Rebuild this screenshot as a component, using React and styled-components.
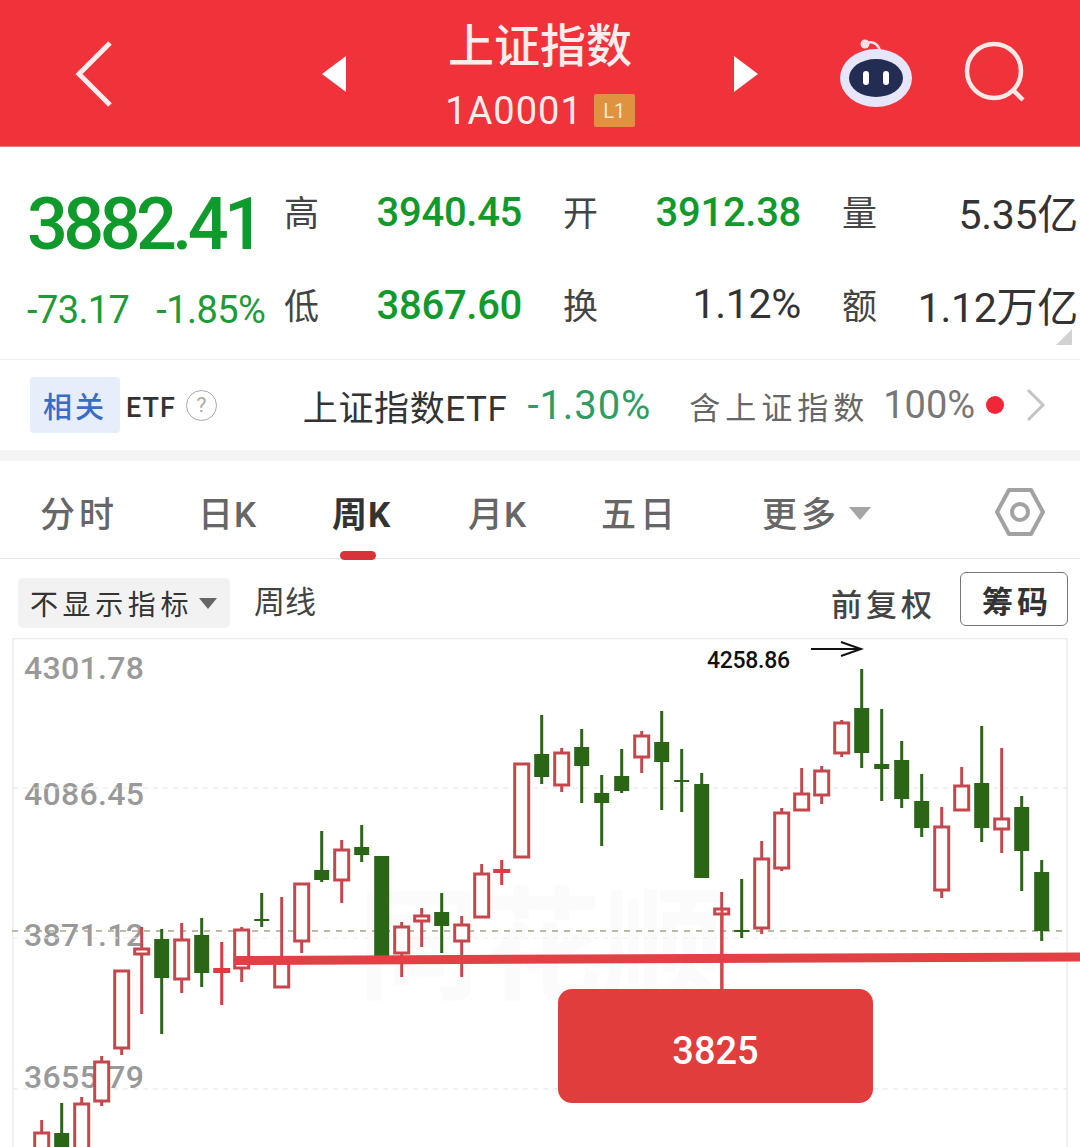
import React from "react";
import styled, { createGlobalStyle } from "styled-components";

const GlobalStyle = createGlobalStyle`
  html, body {
    margin: 0;
    padding: 0;
    background: #fff;
  }
  body {
    font-family: Roboto, "Noto Sans CJK SC", sans-serif;
  }
  * {
    box-sizing: border-box;
  }
`;

const Page = styled.div`
  width: 1080px;
  height: 1147px;
  overflow: hidden;
  background: #fff;
  display: flex;
  flex-direction: column;
`;

/* header */
const Header = styled.header`
  height: 147px;
  flex: none;
  background: #f0323b;
  border-bottom: 1px solid #e9777c;
  display: flex;
  align-items: center;
  color: #ffecec;
`;
const BackIcon = styled.svg`
  width: 44px;
  height: 70px;
  margin-left: 73px;
  margin-top: 2px;
  flex: none;
`;
const Arrow = styled.div`
  width: 0;
  height: 0;
  flex: none;
  margin-top: 2px;
  margin-left: ${({ $left }) => $left}px;
  border-top: 18px solid transparent;
  border-bottom: 18px solid transparent;
  border-left: ${({ $dir }) => ($dir === "right" ? "24px solid #fff" : "none")};
  border-right: ${({ $dir }) => ($dir === "left" ? "24px solid #fff" : "none")};
`;
const TitleBlock = styled.div`
  width: 388px;
  flex: none;
  display: flex;
  flex-direction: column;
  align-items: center;
`;
const Title = styled.div`
  font-size: 46px;
  line-height: 56px;
  font-weight: 500;
  margin-top: -1px;
`;
const CodeRow = styled.div`
  display: flex;
  align-items: center;
  gap: 11px;
  margin-top: 20px;
`;
const Code = styled.span`
  font-size: 38px;
  line-height: 34px;
  letter-spacing: 1px;
`;
const LevelBadge = styled.span`
  width: 41px;
  height: 33px;
  background: #e0923f;
  border-radius: 2px;
  color: #ffe6c8;
  font-size: 20px;
  display: flex;
  align-items: center;
  justify-content: center;
`;
const RobotIcon = styled.svg`
  width: 76px;
  height: 72px;
  margin-left: 80px;
  flex: none;
`;
const SearchIcon = styled.svg`
  width: 66px;
  height: 66px;
  margin-left: 50px;
  flex: none;
`;

/* quote block */
const Quote = styled.section`
  position: relative;
  height: 213px;
  flex: none;
  padding: 17px 0 0 27px;
  display: flex;
  border-bottom: 1px solid #ececec;
`;
const PriceBlock = styled.div`
  width: 257px;
  flex: none;
  display: flex;
  flex-direction: column;
`;
const Price = styled.div`
  height: 93px;
  padding-top: 22px;
  font-size: 72px;
  line-height: 78px;
  font-weight: 500;
  letter-spacing: -4.6px;
  color: #0f9a2b;
  white-space: nowrap;
`;
const Change = styled.div`
  height: 93px;
  display: flex;
  gap: 27px;
  padding-top: 31px;
  font-size: 38px;
  line-height: 44px;
  letter-spacing: -0.6px;
  color: #1f9a38;
  white-space: nowrap;
`;
const StatGrid = styled.div`
  display: grid;
  grid-template-columns: 238px 238px 236px;
  grid-auto-rows: 93px;
  column-gap: 41px;
`;
const Stat = styled.div`
  display: flex;
  align-items: center;
  justify-content: space-between;
`;
const StatLabel = styled.span`
  font-size: 35px;
  color: #444;
`;
const StatValue = styled.span`
  font-size: ${({ $up }) => ($up ? 40 : 41)}px;
  padding-top: ${({ $up }) => ($up ? 3 : 0)}px;
  letter-spacing: -0.3px;
  font-weight: ${({ $up }) => ($up ? 500 : 400)};
  color: ${({ $up }) => ($up ? "#0f9a2b" : "#333")};
  white-space: nowrap;
`;
const CornerMark = styled.div`
  position: absolute;
  right: 8px;
  bottom: 14px;
  width: 0;
  height: 0;
  border-left: 16px solid transparent;
  border-bottom: 16px solid #d2d2d2;
`;

/* related etf row */
const EtfRow = styled.section`
  height: 90px;
  flex: none;
  display: flex;
  align-items: center;
  padding-left: 30px;
  background: #fff;
`;
const RelatedChip = styled.div`
  width: 90px;
  height: 56px;
  flex: none;
  border-radius: 4px;
  background: #e6eefb;
  color: #3b6cc4;
  font-size: 29px;
  font-weight: 500;
  letter-spacing: 3px;
  display: flex;
  align-items: center;
  justify-content: center;
`;
const EtfTag = styled.span`
  font-size: 27px;
  font-weight: 500;
  color: #333;
  margin-left: 6px;
  margin-top: 6px;
  letter-spacing: 1px;
`;
const HelpMark = styled.span`
  width: 31px;
  height: 31px;
  margin-left: 10px;
  flex: none;
  border: 1.5px solid #aaa;
  border-radius: 50%;
  color: #aaa;
  font-size: 21px;
  display: flex;
  align-items: center;
  justify-content: center;
`;
const EtfName = styled.span`
  font-size: 35px;
  color: #333;
  margin-left: 86px;
  letter-spacing: 0.6px;
  white-space: nowrap;
`;
const EtfChange = styled.span`
  font-size: 40px;
  color: #2f9c63;
  margin-left: 20px;
  letter-spacing: 0.9px;
  white-space: nowrap;
`;
const Holding = styled.span`
  font-size: 31px;
  color: #666;
  letter-spacing: 5px;
  margin-left: 38px;
  white-space: nowrap;
`;
const Weight = styled.span`
  font-size: 38px;
  color: #777;
  margin-left: 14px;
`;
const Dot = styled.span`
  width: 18px;
  height: 18px;
  border-radius: 50%;
  flex: none;
  margin-left: 11px;
  background: #f32638;
`;
const ChevronIcon = styled.svg`
  width: 22px;
  height: 36px;
  flex: none;
  margin-left: 21px;
`;
const Band = styled.div`
  height: 11px;
  flex: none;
  background: #f4f4f4;
`;

/* period tabs */
const Tabs = styled.nav`
  height: 98px;
  flex: none;
  position: relative;
  display: grid;
  grid-template-columns: 158px 134px 136px 133px 161px auto;
  align-items: center;
  padding: 12px 0 0 40px;
  border-bottom: 1px solid #e4e4e4;
`;
const Tab = styled.div`
  position: relative;
  height: 44px;
  display: flex;
  align-items: center;
  font-size: 35px;
  line-height: 44px;
  font-weight: ${({ $active }) => ($active ? 700 : 500)};
  color: ${({ $active }) => ($active ? "#333" : "#666")};
  letter-spacing: ${({ $spacing }) => $spacing}px;
  white-space: nowrap;
`;
const Underline = styled.span`
  position: absolute;
  left: 8px;
  bottom: -22px;
  width: 36px;
  height: 9px;
  border-radius: 5px;
  background: #d8333a;
`;
const TriangleDown = styled.span`
  width: 0;
  height: 0;
  margin-left: ${({ $gap }) => $gap}px;
  margin-top: ${({ $top }) => $top || 0}px;
  border-left: ${({ $half }) => $half}px solid transparent;
  border-right: ${({ $half }) => $half}px solid transparent;
  border-top: ${({ $half }) => $half + 2}px solid ${({ $color }) => $color};
`;
const HexIcon = styled.svg`
  position: absolute;
  right: 34px;
  top: 26px;
  width: 52px;
  height: 50px;
`;

/* chart toolbar */
const Toolbar = styled.div`
  height: 79px;
  flex: none;
  display: flex;
  align-items: center;
  padding: 6px 12px 0 18px;
`;
const IndicatorChip = styled.div`
  width: 212px;
  height: 50px;
  margin-top: 3px;
  flex: none;
  display: flex;
  align-items: center;
  padding-left: 12px;
  border-radius: 5px;
  background: #f2f2f2;
  color: #333;
  font-size: 28px;
  letter-spacing: 4.6px;
  white-space: nowrap;
`;
const LineLabel = styled.span`
  margin-left: 24px;
  margin-top: -4px;
  font-size: 31px;
  color: #444;
`;
const Adjust = styled.span`
  margin-left: auto;
  margin-top: 2px;
  font-size: 31px;
  letter-spacing: 4px;
  color: #444;
  font-weight: 500;
`;
const ChipButton = styled.div`
  width: 108px;
  height: 54px;
  margin-left: 24px;
  margin-top: -5px;
  flex: none;
  display: flex;
  align-items: center;
  justify-content: center;
  padding-left: 6px;
  border: 1px solid #777;
  border-radius: 6px;
  color: #333;
  font-size: 31px;
  font-weight: 700;
  letter-spacing: 4px;
`;

/* chart */
const Chart = styled.section`
  position: relative;
  flex: 1;
  overflow: hidden;
`;
const AxisLabel = styled.span`
  position: absolute;
  left: 24px;
  top: ${({ $y }) => $y}px;
  font-size: 32px;
  line-height: 38px;
  font-weight: 500;
  letter-spacing: 0.3px;
  color: #999;
`;
const Watermark = styled.div`
  position: absolute;
  left: 358px;
  top: 245px;
  font-size: 122px;
  line-height: 130px;
  font-weight: 700;
  color: #fbfbfb;
  white-space: nowrap;
`;
const Plot = styled.svg`
  position: absolute;
  left: 0;
  top: 0;
  width: 1080px;
  height: 509px;
`;
const HighLabel = styled.span`
  position: absolute;
  left: 707px;
  top: 9px;
  font-size: 23px;
  line-height: 28px;
  font-weight: 500;
  letter-spacing: -0.3px;
  color: #111;
`;
const PriceTag = styled.div`
  position: absolute;
  left: 558px;
  top: 351px;
  width: 315px;
  height: 114px;
  border-radius: 14px;
  background: #e03d3c;
  color: #fff;
  font-size: 38px;
  font-weight: 500;
  display: flex;
  align-items: center;
  justify-content: center;
  padding-top: 9px;
`;

const RED = "#c4474e";
const GREEN = "#2b6516";

// [colour, wick top, wick bottom, body top, body bottom], one candle per 20px from x=41.7
const CANDLES = [
  ["r", 1120, 1160, 1132, 1160],
  ["g", 1103, 1160, 1133, 1160],
  ["r", 1097, 1160, 1103, 1160],
  ["r", 1056, 1106, 1061, 1102],
  ["r", 970, 1055, 970, 1049],
  ["r", 927, 1014, 948, 955],
  ["g", 929, 1034, 939, 978],
  ["r", 923, 993, 939, 980],
  ["g", 918, 987, 935, 973],
  ["s", 942, 1005, 968, 973],
  ["r", 927, 982, 929, 969],
  ["g", 893, 927, 919, 921],
  ["r", 897, 988, 962, 988],
  ["r", 883, 953, 883, 942],
  ["g", 831, 882, 870, 880],
  ["r", 840, 903, 849, 881],
  ["g", 825, 862, 847, 855],
  ["g", 856, 958, 856, 958],
  ["r", 922, 977, 926, 954],
  ["r", 908, 947, 915, 922],
  ["g", 893, 953, 912, 926],
  ["r", 916, 977, 924, 942],
  ["r", 864, 918, 873, 918],
  ["s", 860, 885, 869, 873],
  ["r", 763, 858, 763, 858],
  ["g", 715, 784, 754, 777],
  ["r", 748, 792, 752, 786],
  ["g", 729, 803, 747, 766],
  ["g", 775, 846, 793, 803],
  ["g", 749, 793, 776, 791],
  ["r", 731, 773, 735, 758],
  ["g", 711, 810, 742, 762],
  ["g", 749, 812, 780, 782],
  ["g", 773, 878, 784, 878],
  ["r", 892, 990, 908, 915],
  ["g", 879, 938, 930, 932],
  ["r", 841, 934, 858, 929],
  ["r", 808, 871, 812, 869],
  ["r", 768, 811, 793, 811],
  ["r", 766, 804, 770, 796],
  ["r", 720, 757, 722, 754],
  ["g", 669, 768, 708, 753],
  ["g", 709, 801, 764, 769],
  ["g", 741, 808, 760, 799],
  ["g", 774, 837, 801, 828],
  ["r", 807, 898, 826, 891],
  ["r", 767, 811, 785, 811],
  ["g", 726, 842, 783, 828],
  ["r", 748, 853, 818, 830],
  ["g", 796, 891, 807, 851],
  ["g", 860, 941, 872, 931],
];

const Candle = ({ data, index }) => {
  const [kind, wickTop, wickBottom, bodyTop, bodyBottom] = data;
  const x = 41.7 + index * 20;
  const color = kind === "g" ? GREEN : kind === "s" ? "#dd3b3f" : RED;
  const bodyWidth = kind === "s" ? 17 : 15;
  return (
    <g>
      <line x1={x} x2={x} y1={wickTop} y2={wickBottom} stroke={color} strokeWidth="3" />
      {kind === "r" ? (
        <rect
          x={x - 7}
          y={bodyTop + 1}
          width="14"
          height={bodyBottom - bodyTop - 2}
          fill="#fff"
          stroke={color}
          strokeWidth="3"
        />
      ) : (
        <rect
          x={x - bodyWidth / 2}
          y={bodyTop}
          width={bodyWidth}
          height={bodyBottom - bodyTop}
          fill={color}
        />
      )}
    </g>
  );
};

const App = () => {
  return (
    <Page>
      <GlobalStyle />
      <Header>
        <BackIcon viewBox="0 0 44 70">
          <path d="M37 4 L6 35 L37 66" fill="none" stroke="#ffecec" strokeWidth="5" />
        </BackIcon>
        <Arrow $dir="left" $left={205} />
        <TitleBlock>
          <Title>上证指数</Title>
          <CodeRow>
            <Code>1A0001</Code>
            <LevelBadge>L1</LevelBadge>
          </CodeRow>
        </TitleBlock>
        <Arrow $dir="right" $left={0} />
        <RobotIcon viewBox="0 0 76 72">
          <path d="M27 7 C33 3 40 6 42 14" fill="none" stroke="#ecdfe8" strokeWidth="2.5" />
          <circle cx="27" cy="7" r="4.5" fill="#f3dfe4" />
          <ellipse cx="38" cy="41" rx="36" ry="29" fill="#e6e6fa" />
          <ellipse cx="38" cy="41" rx="27" ry="19" fill="#232c52" />
          <rect x="25" y="34" width="6" height="14" rx="3" fill="#fff" />
          <rect x="45" y="34" width="6" height="14" rx="3" fill="#fff" />
        </RobotIcon>
        <SearchIcon viewBox="0 0 66 66">
          <circle cx="30" cy="31" r="27" fill="none" stroke="#ffe8e8" strokeWidth="4.5" />
          <path d="M50 51 L59 60" stroke="#ffe8e8" strokeWidth="4.5" />
        </SearchIcon>
      </Header>

      <Quote>
        <PriceBlock>
          <Price>3882.41</Price>
          <Change>
            <span>-73.17</span>
            <span>-1.85%</span>
          </Change>
        </PriceBlock>
        <StatGrid>
          <Stat>
            <StatLabel>高</StatLabel>
            <StatValue $up>3940.45</StatValue>
          </Stat>
          <Stat>
            <StatLabel>开</StatLabel>
            <StatValue $up>3912.38</StatValue>
          </Stat>
          <Stat>
            <StatLabel>量</StatLabel>
            <StatValue>5.35亿</StatValue>
          </Stat>
          <Stat>
            <StatLabel>低</StatLabel>
            <StatValue $up>3867.60</StatValue>
          </Stat>
          <Stat>
            <StatLabel>换</StatLabel>
            <StatValue>1.12%</StatValue>
          </Stat>
          <Stat>
            <StatLabel>额</StatLabel>
            <StatValue>1.12万亿</StatValue>
          </Stat>
        </StatGrid>
        <CornerMark />
      </Quote>

      <EtfRow>
        <RelatedChip>相关</RelatedChip>
        <EtfTag>ETF</EtfTag>
        <HelpMark>?</HelpMark>
        <EtfName>上证指数ETF</EtfName>
        <EtfChange>-1.30%</EtfChange>
        <Holding>含上证指数</Holding>
        <Weight>100%</Weight>
        <Dot />
        <ChevronIcon viewBox="0 0 22 36">
          <path d="M3 3 L18 18 L3 33" fill="none" stroke="#c4c4c4" strokeWidth="3" />
        </ChevronIcon>
      </EtfRow>
      <Band />

      <Tabs>
        <Tab $spacing={4}>分时</Tab>
        <Tab $spacing={1}>日K</Tab>
        <Tab $active $spacing={1}>
          周K
          <Underline />
        </Tab>
        <Tab $spacing={1}>月K</Tab>
        <Tab $spacing={4}>五日</Tab>
        <Tab $spacing={4}>
          更多
          <TriangleDown $half={11} $gap={9} $top={-4} $color="#a6a6a6" />
        </Tab>
        <HexIcon viewBox="0 0 52 50">
          <path d="M15 3 H37 L49 25 L37 47 H15 L3 25 Z" fill="none" stroke="#a2a2a2" strokeWidth="4" strokeLinejoin="round" />
          <circle cx="26" cy="25" r="8" fill="none" stroke="#a2a2a2" strokeWidth="4" />
        </HexIcon>
      </Tabs>

      <Toolbar>
        <IndicatorChip>
          不显示指标
          <TriangleDown $half={9} $gap={6} $color="#666" />
        </IndicatorChip>
        <LineLabel>周线</LineLabel>
        <Adjust>前复权</Adjust>
        <ChipButton>筹码</ChipButton>
      </Toolbar>

      <Chart>
        <AxisLabel $y={11}>4301.78</AxisLabel>
        <AxisLabel $y={137}>4086.45</AxisLabel>
        <AxisLabel $y={278}>3871.12</AxisLabel>
        <AxisLabel $y={420}>3655.79</AxisLabel>
        <Watermark>同花顺</Watermark>
        <Plot viewBox="0 638 1080 509">
          <path d="M13 1147 V638.5 H1067 V1147" fill="none" stroke="#ebebeb" strokeWidth="1.5" />
          <path d="M13 788 H1067 M13 1089 H1067" stroke="#e4e4e4" strokeWidth="1" strokeDasharray="5 5" />
          <path d="M12 931 H1063" stroke="#a5a58e" strokeWidth="1.5" strokeDasharray="6 6" />
          <path d="M13 938 H1063" stroke="#eeeeee" strokeWidth="1" strokeDasharray="5 5" />
          {CANDLES.map((candle, i) => (
            <Candle key={i} data={candle} index={i} />
          ))}
          <path d="M235 960.5 L1080 957" stroke="#e14044" strokeWidth="9" />
          <path d="M722 908 V992" stroke="#d4474c" strokeWidth="3" />
          <path d="M811 649 H860 M841 642 L861 649 L841 656" fill="none" stroke="#111" strokeWidth="2" />
        </Plot>
        <HighLabel>4258.86</HighLabel>
        <PriceTag>3825</PriceTag>
      </Chart>
    </Page>
  );
};

export default App;
